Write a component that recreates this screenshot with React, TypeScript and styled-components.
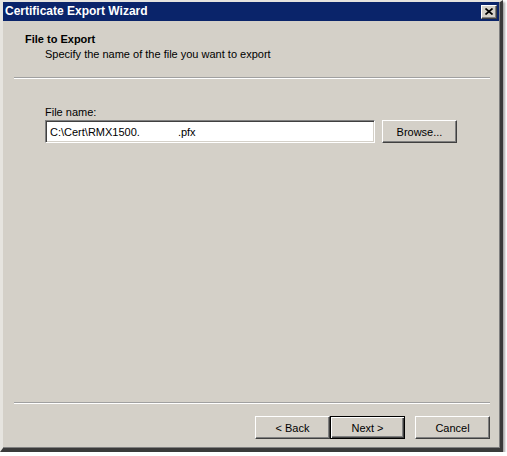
import React from 'react';
import styled, { createGlobalStyle, css } from 'styled-components';

const GlobalStyle = createGlobalStyle`
  html, body {
    margin: 0;
    padding: 0;
    background: #ffffff;
  }
  body {
    font-family: 'Liberation Sans', Arial, sans-serif;
    font-size: 11px;
    color: #000;
  }
`;

const Window = styled.div`
  box-sizing: border-box;
  width: 503px;
  height: 452px;
  display: flex;
  flex-direction: column;
  background: #d4d0c8;
  border-top: 2px solid #e6e4df;
  border-left: 3px solid #e6e4df;
  border-right: 3px solid #3a3a3a;
  border-bottom: 4px solid #3a3a3a;
  box-shadow: inset -1px -1px 0 #808080, 2px 2px 2px rgba(0, 0, 0, 0.35);
`;

const TitleBar = styled.div`
  height: 19px;
  margin-right: 1px;
  display: flex;
  align-items: center;
  justify-content: space-between;
  background: #0a246a;
  padding: 0 2px;
`;

const TitleText = styled.span`
  color: #fff;
  font-family: 'Liberation Sans', Arial, sans-serif;
  font-weight: bold;
  font-size: 12px;
  line-height: 19px;
`;

const CloseButton = styled.div`
  box-sizing: border-box;
  width: 16px;
  height: 14px;
  display: flex;
  align-items: center;
  justify-content: center;
  background: #d4d0c8;
  border: 1px solid;
  border-color: #fff #404040 #404040 #fff;
  box-shadow: inset -1px -1px 0 #808080;
`;

const Header = styled.div`
  padding: 12px 0 0 22px;
`;

const HeaderTitle = styled.div`
  font-weight: bold;
  font-size: 11px;
  line-height: 13px;
`;

const HeaderSubtitle = styled.div`
  margin: 2px 0 0 20px;
  font-size: 11px;
  line-height: 13px;
`;

const Separator = styled.div<{ $top: number }>`
  margin: ${p => p.$top}px 10px 0 11px;
  border-top: 1px solid #a0a0a0;
  border-bottom: 1px solid #ffffff;
`;

const Body = styled.div`
  flex: 1;
  padding: 27px 0 0 42px;
`;

const FieldLabel = styled.div`
  font-size: 11px;
  line-height: 13px;
  margin-bottom: 1px;
`;

const FieldRow = styled.div`
  display: flex;
  gap: 7px;
`;

const TextBox = styled.div`
  box-sizing: border-box;
  width: 330px;
  height: 23px;
  display: flex;
  align-items: center;
  padding-left: 4px;
  background: #fff;
  border: 1px solid;
  border-color: #808080 #ffffff #ffffff #808080;
  box-shadow: inset 1px 1px 0 #404040, inset -1px -1px 0 #d4d0c8;
  font-size: 11px;
  white-space: pre;
`;

const Gap = styled.span<{ $w: number }>`
  display: inline-block;
  width: ${p => p.$w}px;
`;

const Button = styled.button<{ $primary?: boolean }>`
  box-sizing: border-box;
  width: 75px;
  height: 23px;
  padding: 0;
  background: #d4d0c8;
  font-family: 'Liberation Sans', Arial, sans-serif;
  font-size: 11px;
  color: #000;
  border: 1px solid;
  border-color: #fff #404040 #404040 #fff;
  box-shadow: inset -1px -1px 0 #808080;
  ${p =>
    p.$primary &&
    css`
      border-color: #000;
      box-shadow: inset 1px 1px 0 #fff, inset -1px -1px 0 #404040, inset -2px -2px 0 #808080;
    `}
`;

const Footer = styled.div`
  display: flex;
  justify-content: flex-end;
  padding: 12px 10px 9px 0;
`;

const ButtonPair = styled.div`
  display: flex;
  margin-right: 10px;
`;

export default function App() {
  return (
    <>
      <GlobalStyle />
      <Window>
        <TitleBar>
          <TitleText>Certificate Export Wizard</TitleText>
          <CloseButton>
            <svg width="8" height="7" viewBox="0 0 8 7">
              <path d="M0.5 0.5 L7.5 6.5 M7.5 0.5 L0.5 6.5" stroke="#000" strokeWidth="1.7" />
            </svg>
          </CloseButton>
        </TitleBar>
        <Header>
          <HeaderTitle>File to Export</HeaderTitle>
          <HeaderSubtitle>Specify the name of the file you want to export</HeaderSubtitle>
        </Header>
        <Separator $top={16} />
        <Body>
          <FieldLabel>File name:</FieldLabel>
          <FieldRow>
            <TextBox>
              C:\Cert\RMX1500.<Gap $w={38} />.pfx
            </TextBox>
            <Button>Browse...</Button>
          </FieldRow>
        </Body>
        <Separator $top={0} />
        <Footer>
          <ButtonPair>
            <Button>&lt; Back</Button>
            <Button $primary>Next &gt;</Button>
          </ButtonPair>
          <Button>Cancel</Button>
        </Footer>
      </Window>
    </>
  );
}
